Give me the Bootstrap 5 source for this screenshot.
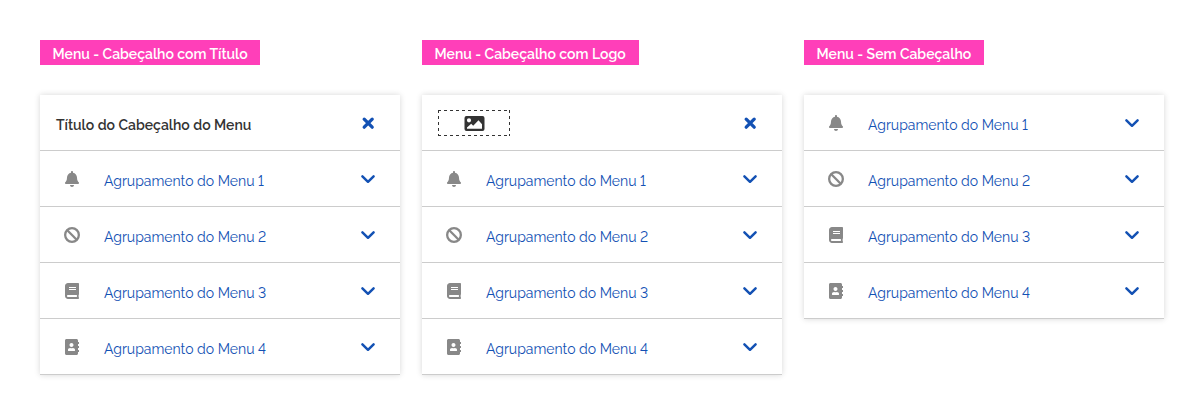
<!DOCTYPE html>
<html lang="pt-BR">
<head>
<meta charset="utf-8">
<meta name="viewport" content="width=device-width, initial-scale=1">
<title>Menu</title>
<link href="https://cdn.jsdelivr.net/npm/bootstrap@5.3.0/dist/css/bootstrap.min.css" rel="stylesheet">
<style>
body { font-family: Raleway, Lato, "Open Sans", sans-serif; font-size: 14px; color: #333; font-variant-numeric: lining-nums; }
.board { gap: 22px; padding: 40px; }
.menu-col { width: 360px; }
.tag { background: #ff3fb9; color: #fff; height: 25px; margin-bottom: 30px; font-weight: 600; font-size: 14px; line-height: 28px; padding-left: 12.5px; white-space: nowrap; }
.menu-box { box-shadow: 0 0 6px rgba(0,0,0,.16); background: #fff; }
.menu-line { height: 56px; border-bottom: 1px solid #ccc; padding: 0 24px; color: #1351b4; text-decoration: none; font-weight: 400; }
.menu-line.head { padding-left: 16px; color: #333; font-weight: 600; }
.label { margin-left: 24px; padding-top: 5px; line-height: 20px; white-space: nowrap; }
.menu-line.head .label { margin-left: 0; }
.icon { width: 16px; height: 16px; fill: #888; flex: none; }
.action { width: 16px; height: 16px; fill: none; stroke: #1351b4; stroke-width: 2.5; stroke-linecap: round; stroke-linejoin: round; flex: none; }
.action.close-x { stroke-width: 3.3; }
.logo { width: 72px; height: 26px; }
.t1 { width: 220px; } .t2 { width: 217px; } .t3 { width: 180px; }
</style>
</head>
<body>
<svg class="d-none">
  <symbol id="bell" viewBox="-32 0 512 512"><path d="M224 512c35.32 0 63.97-28.65 63.97-64H160.03c0 35.35 28.65 64 63.97 64zm215.39-149.71c-19.32-20.76-55.47-51.99-55.47-154.29 0-77.7-54.48-139.9-127.94-155.16V32c0-17.67-14.32-32-31.98-32s-31.98 14.33-31.98 32v20.84C118.56 68.1 64.08 130.3 64.08 208c0 102.3-36.15 133.53-55.47 154.29-6 6.45-8.66 14.16-8.61 21.71.11 16.4 12.98 32 32.1 32h383.8c19.12 0 32-15.6 32.1-32 .05-7.55-2.61-15.27-8.61-21.71z"/></symbol>
  <symbol id="ban" viewBox="0 0 16 16"><circle cx="8" cy="8" r="6.850" fill="none" stroke="#888" stroke-width="2.300"/><path d="m3.300 3.300 9.400 9.400" stroke="#888" stroke-width="2.300"/></symbol>
  <symbol id="book" viewBox="-32 0 512 512"><path d="M448 360V24c0-13.3-10.7-24-24-24H96C43 0 0 43 0 96v320c0 53 43 96 96 96h328c13.3 0 24-10.7 24-24v-16c0-7.5-3.5-14.3-8.9-18.7-4.2-15.4-4.2-59.3 0-74.7 5.4-4.3 8.9-11.1 8.9-18.6zM128 134c0-3.3 2.7-6 6-6h212c3.3 0 6 2.7 6 6v20c0 3.3-2.7 6-6 6H134c-3.3 0-6-2.7-6-6v-20zm0 64c0-3.3 2.7-6 6-6h212c3.3 0 6 2.7 6 6v20c0 3.3-2.7 6-6 6H134c-3.3 0-6-2.7-6-6v-20zm253.4 250H96c-17.7 0-32-14.3-32-32 0-17.6 14.4-32 32-32h285.4c-1.9 17.1-1.9 46.9 0 64z"/></symbol>
  <symbol id="contacts" viewBox="-32 0 512 512"><path d="M436 160c6.6 0 12-5.4 12-12v-40c0-6.6-5.4-12-12-12h-20V48c0-26.5-21.5-48-48-48H48C21.5 0 0 21.5 0 48v416c0 26.5 21.5 48 48 48h320c26.5 0 48-21.5 48-48v-48h20c6.6 0 12-5.4 12-12v-40c0-6.6-5.4-12-12-12h-20v-64h20c6.6 0 12-5.4 12-12v-40c0-6.6-5.4-12-12-12h-20v-64h20zm-228-32c35.3 0 64 28.7 64 64s-28.7 64-64 64-64-28.7-64-64 28.7-64 64-64zm112 236.8c0 10.6-10 19.2-22.4 19.2H118.4C106 384 96 375.4 96 364.8v-19.2c0-31.8 30.1-57.6 67.2-57.6h5c12.3 5.1 25.7 8 39.8 8s27.6-2.9 39.8-8h5c37.1 0 67.2 25.8 67.2 57.6v19.2z"/></symbol>
  <symbol id="down" viewBox="0 0 16 16"><path d="M2.400 5.300 8 10.800l5.600-5.500"/></symbol>
  <symbol id="close" viewBox="0 0 16 16"><path d="m4.200 4.200 8 8m0-8-8 8"/></symbol>
</svg>
<main class="board d-flex align-items-start">
  <section class="menu-col">
    <div class="tag t1">Menu - Cabeçalho com Título</div>
    <nav class="menu-box">
      <div class="menu-line head d-flex align-items-center"><span class="label">Título do Cabeçalho do Menu</span><svg class="action close-x ms-auto"><use href="#close"/></svg></div>
      <a class="menu-line d-flex align-items-center"><svg class="icon"><use href="#bell"/></svg><span class="label">Agrupamento do Menu 1</span><svg class="action ms-auto"><use href="#down"/></svg></a>
      <a class="menu-line d-flex align-items-center"><svg class="icon"><use href="#ban"/></svg><span class="label">Agrupamento do Menu 2</span><svg class="action ms-auto"><use href="#down"/></svg></a>
      <a class="menu-line d-flex align-items-center"><svg class="icon"><use href="#book"/></svg><span class="label">Agrupamento do Menu 3</span><svg class="action ms-auto"><use href="#down"/></svg></a>
      <a class="menu-line d-flex align-items-center"><svg class="icon"><use href="#contacts"/></svg><span class="label">Agrupamento do Menu 4</span><svg class="action ms-auto"><use href="#down"/></svg></a>
    </nav>
  </section>
  <section class="menu-col">
    <div class="tag t2">Menu - Cabeçalho com Logo</div>
    <nav class="menu-box">
      <div class="menu-line head d-flex align-items-center">
        <svg class="logo" viewBox="0 0 72 26"><path d="M0 .5h72M0 25.5h72M.5 0v26M71.500 0v26" fill="none" stroke="#333" stroke-dasharray="3 3"/><path fill="#333" fill-rule="evenodd" d="M28.500 6h16a2 2 0 0 1 2 2v11a2 2 0 0 1-2 2h-16a2 2 0 0 1-2-2V8a2 2 0 0 1 2-2zM31 8.200a2.100 2.100 0 1 0 0 4.200 2.100 2.100 0 0 0 0-4.200zM29 18.800h15v-4.600l-3.500-4-5.300 5.500-2-1.900-4.200 3.600z"/></svg>
        <svg class="action close-x ms-auto"><use href="#close"/></svg></div>
      <a class="menu-line d-flex align-items-center"><svg class="icon"><use href="#bell"/></svg><span class="label">Agrupamento do Menu 1</span><svg class="action ms-auto"><use href="#down"/></svg></a>
      <a class="menu-line d-flex align-items-center"><svg class="icon"><use href="#ban"/></svg><span class="label">Agrupamento do Menu 2</span><svg class="action ms-auto"><use href="#down"/></svg></a>
      <a class="menu-line d-flex align-items-center"><svg class="icon"><use href="#book"/></svg><span class="label">Agrupamento do Menu 3</span><svg class="action ms-auto"><use href="#down"/></svg></a>
      <a class="menu-line d-flex align-items-center"><svg class="icon"><use href="#contacts"/></svg><span class="label">Agrupamento do Menu 4</span><svg class="action ms-auto"><use href="#down"/></svg></a>
    </nav>
  </section>
  <section class="menu-col">
    <div class="tag t3">Menu - Sem Cabeçalho</div>
    <nav class="menu-box">
      <a class="menu-line d-flex align-items-center"><svg class="icon"><use href="#bell"/></svg><span class="label">Agrupamento do Menu 1</span><svg class="action ms-auto"><use href="#down"/></svg></a>
      <a class="menu-line d-flex align-items-center"><svg class="icon"><use href="#ban"/></svg><span class="label">Agrupamento do Menu 2</span><svg class="action ms-auto"><use href="#down"/></svg></a>
      <a class="menu-line d-flex align-items-center"><svg class="icon"><use href="#book"/></svg><span class="label">Agrupamento do Menu 3</span><svg class="action ms-auto"><use href="#down"/></svg></a>
      <a class="menu-line d-flex align-items-center"><svg class="icon"><use href="#contacts"/></svg><span class="label">Agrupamento do Menu 4</span><svg class="action ms-auto"><use href="#down"/></svg></a>
    </nav>
  </section>
</main>
<script src="https://cdn.jsdelivr.net/npm/bootstrap@5.3.0/dist/js/bootstrap.bundle.min.js"></script>
</body>
</html>
